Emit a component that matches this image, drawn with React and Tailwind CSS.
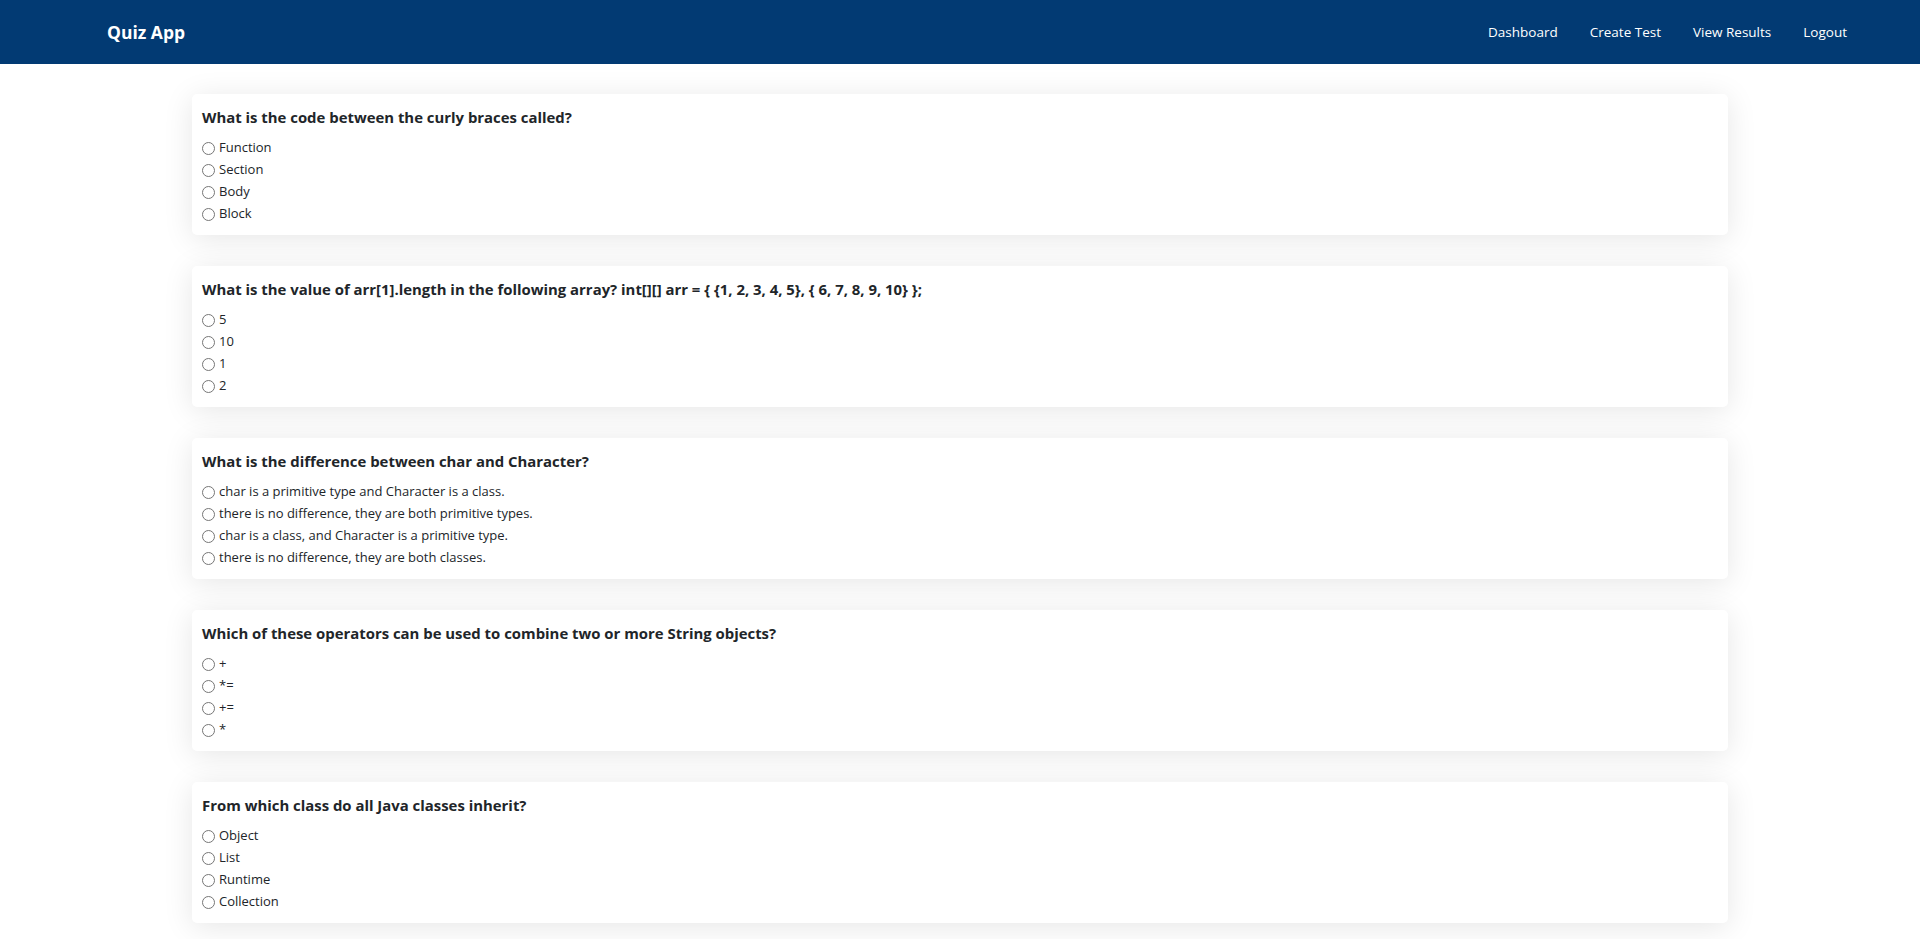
import React from "react";

const questions = [
  {
    q: "What is the code between the curly braces called?",
    opts: ["Function", "Section", "Body", "Block"],
  },
  {
    q: "What is the value of arr[1].length in the following array? int[][] arr = { {1, 2, 3, 4, 5}, { 6, 7, 8, 9, 10} };",
    opts: ["5", "10", "1", "2"],
  },
  {
    q: "What is the difference between char and Character?",
    opts: [
      "char is a primitive type and Character is a class.",
      "there is no difference, they are both primitive types.",
      "char is a class, and Character is a primitive type.",
      "there is no difference, they are both classes.",
    ],
  },
  {
    q: "Which of these operators can be used to combine two or more String objects?",
    opts: ["+", "*=", "+=", "*"],
  },
  {
    q: "From which class do all Java classes inherit?",
    opts: ["Object", "List", "Runtime", "Collection"],
  },
];

function Radio() {
  return (
    <span className="inline-block w-[13px] h-[13px] rounded-full border border-[#767676] bg-white shrink-0" />
  );
}

export default function App() {
  return (
    <div
      className="min-h-screen bg-white text-[#212529]"
      style={{ fontFamily: '"Open Sans", "Noto Sans", Arial, sans-serif' }}
    >
      <header className="h-[64px] bg-[#023a73] flex items-center justify-between pl-[107px] pr-[73px]">
        <div className="text-white font-bold text-[17.5px]">Quiz App</div>
        <nav className="flex items-center gap-[32px] text-white text-[13.5px]">
          <a>Dashboard</a>
          <a>Create Test</a>
          <a>View Results</a>
          <a>Logout</a>
        </nav>
      </header>
      <main className="px-[192px] pt-[30px] pb-[30px] flex flex-col gap-[31px]">
        {questions.map((item, i) => (
          <div
            key={i}
            className="bg-white rounded-[5px] shadow-[0_4px_30px_rgba(0,0,0,0.1)] px-[10px] pt-[12px] pb-[10px] h-[141px]"
          >
            <h3 className="font-bold text-[14.9px] leading-[22px] text-[#212529]">
              {item.q}
            </h3>
            <div className="mt-[11px] flex flex-col">
              {item.opts.map((o, j) => (
                <label key={j} className="flex items-center gap-[4px] h-[18px] mt-[4px] first:mt-0 text-[13px] text-[#212529]">
                  <Radio />
                  <span>{o}</span>
                </label>
              ))}
            </div>
          </div>
        ))}
      </main>
    </div>
  );
}
